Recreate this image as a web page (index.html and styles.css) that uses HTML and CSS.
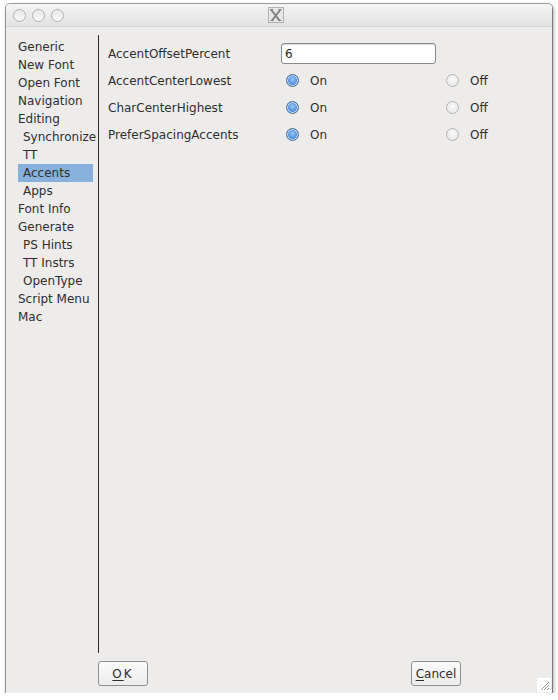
FILE: index.html
```html
<!DOCTYPE html>
<html>
<head>
<meta charset="utf-8">
<link rel="stylesheet" href="styles.css">
</head>
<body>
<div class="window">
  <div class="titlebar">
    <div class="lights"><span class="light"></span><span class="light"></span><span class="light"></span></div>
    <div class="title-icon">
      <svg width="16" height="16" viewBox="0 0 16 16"><rect x="0.5" y="0.5" width="15" height="15" fill="#e6e6e6" stroke="#9a9a9a"/><path d="M3 2.5 L11.5 13.5 M12.5 2.5 L4 13.5" stroke="#555" stroke-width="2" fill="none"/><path d="M2 2.5h3M10.5 2.5h3M2.5 13.5h3M10 13.5h3.5" stroke="#555" stroke-width="1"/></svg>
    </div>
  </div>
  <div class="body">
    <div class="main">
      <ul class="side">
        <li>Generic</li>
        <li>New Font</li>
        <li>Open Font</li>
        <li>Navigation</li>
        <li>Editing</li>
        <li class="sub">Synchronize</li>
        <li class="sub">TT</li>
        <li class="sub sel">Accents</li>
        <li class="sub">Apps</li>
        <li>Font Info</li>
        <li>Generate</li>
        <li class="sub">PS Hints</li>
        <li class="sub">TT Instrs</li>
        <li class="sub">OpenType</li>
        <li>Script Menu</li>
        <li>Mac</li>
      </ul>
      <div class="panel">
        <div class="row">
          <span class="label">AccentOffsetPercent</span>
          <input class="field" type="text" value="6">
        </div>
        <div class="row">
          <span class="label">AccentCenterLowest</span>
          <span class="opt on"><span class="radio checked"></span>On</span>
          <span class="opt"><span class="radio"></span>Off</span>
        </div>
        <div class="row">
          <span class="label">CharCenterHighest</span>
          <span class="opt on"><span class="radio checked"></span>On</span>
          <span class="opt"><span class="radio"></span>Off</span>
        </div>
        <div class="row">
          <span class="label">PreferSpacingAccents</span>
          <span class="opt on"><span class="radio checked"></span>On</span>
          <span class="opt"><span class="radio"></span>Off</span>
        </div>
      </div>
    </div>
    <div class="buttons">
      <button class="btn ok"><u>O</u>K</button>
      <button class="btn cancel"><u>C</u>ancel</button>
    </div>
    <div class="grip">
      <svg width="12" height="12" viewBox="0 0 12 12"><path d="M11 3 L3 11 M11 6 L6 11 M11 9 L9 11" stroke="#999" stroke-width="1" fill="none"/></svg>
    </div>
  </div>
</div>
</body>
</html>
```
FILE: styles.css
```css
html, body {
  margin: 0;
  padding: 0;
  background: #ffffff;
}
body {
  font-family: "DejaVu Sans", "Liberation Sans", sans-serif;
  font-size: 12px;
  color: #2e2e2e;
}
.window {
  margin: 4px 0 0 6px;
  width: 546px;
  height: 689px;
  background: #edecea;
  border-radius: 4px 4px 0 0;
  box-shadow: 0 0 0 1px rgba(0,0,0,0.35), 1px 2px 4px rgba(0,0,0,0.45);
  display: flex;
  flex-direction: column;
  overflow: hidden;
}
.titlebar {
  height: 22px;
  flex: none;
  background: linear-gradient(#f4f4f4, #e2e2e2);
  border-bottom: 1px solid #d6d6d6;
  display: flex;
  align-items: center;
  position: relative;
}
.lights {
  display: flex;
  gap: 6px;
  padding-left: 7px;
}
.light {
  width: 11px;
  height: 11px;
  border-radius: 50%;
  border: 1px solid #b0b0b0;
  background: linear-gradient(#e8e8e8, #f8f8f8);
}
.title-icon {
  margin-left: 204px;
  height: 16px;
  opacity: 0.7;
}
.body {
  flex: 1;
  display: flex;
  flex-direction: column;
  position: relative;
}
.main {
  flex: 1;
  display: flex;
  padding-top: 8px;
}
.side {
  list-style: none;
  margin: 0;
  padding: 3px 0 0 12px;
  width: 80px;
  border-right: 1px solid #2a2a2a;
  flex: none;
  box-sizing: content-box;
}
.side li {
  height: 18px;
  line-height: 18px;
  white-space: nowrap;
}
.side li.sub {
  padding-left: 5px;
}
.side li.sel {
  background: #88b1de;
  width: 70px;
}
.panel {
  flex: 1;
  padding: 8px 0 0 9px;
}
.row {
  display: flex;
  align-items: center;
  height: 27px;
}
.row:first-child {
  height: 21px;
  margin-bottom: 3px;
}
.label {
  width: 173px;
  flex: none;
}
.field {
  width: 155px;
  height: 21px;
  box-sizing: border-box;
  border: 1px solid #8a8a8a;
  border-radius: 3px;
  background: #fff;
  font: inherit;
  padding: 0 3px;
  color: #222;
  box-shadow: inset 0 1px 1px rgba(0,0,0,0.15);
}
.opt {
  display: flex;
  align-items: center;
  flex: none;
}
.opt.on {
  width: 160px;
  margin-left: 5px;
}
.radio {
  width: 11px;
  height: 11px;
  border-radius: 50%;
  border: 1px solid #b4b4b4;
  background: radial-gradient(circle at 50% 40%, #fafafa, #e2e2e2);
  margin-right: 11px;
  box-sizing: content-box;
}
.radio.checked {
  border-color: #4a6c96;
  background: radial-gradient(circle at 50% 40%, #9cc6f3 0%, #5290e0 55%, #3a72c4 100%);
  box-shadow: inset 0 0 0 1px #c4dcf4;
}
.buttons {
  flex: none;
  height: 40px;
  display: flex;
  align-items: flex-start;
  padding: 8px 0 0 92px;
  box-sizing: border-box;
}
.btn {
  height: 25px;
  border: 1px solid #8e8e8e;
  border-radius: 3px;
  background: linear-gradient(#fbfbfb, #ececec);
  font: inherit;
  color: #2e2e2e;
  padding: 0;
}
.btn u {
  text-underline-offset: 2px;
}
.ok {
  width: 50px;
  letter-spacing: 2px;
}
.cancel {
  width: 50px;
  margin-left: 263px;
}
.grip {
  position: absolute;
  right: 1px;
  bottom: 1px;
  width: 14px;
  height: 14px;
  background: #fff;
  display: flex;
  align-items: center;
  justify-content: center;
}
```
